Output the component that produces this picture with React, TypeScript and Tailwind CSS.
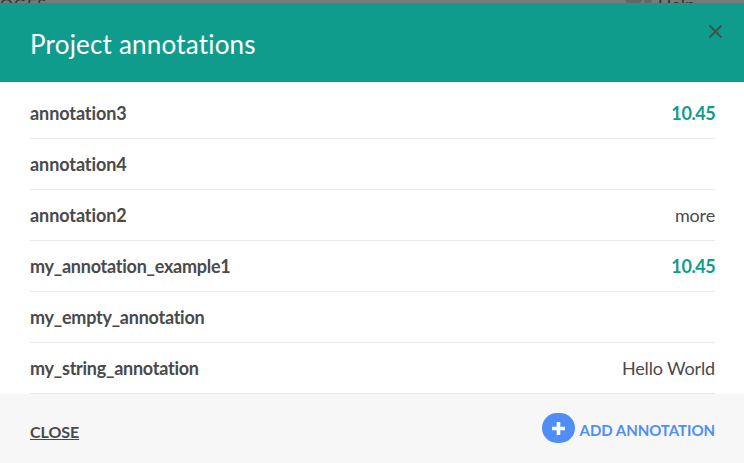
type Annotation = { name: string; value?: string; numeric?: boolean };

const annotations: Annotation[] = [
  { name: "annotation3", value: "10.45", numeric: true },
  { name: "annotation4" },
  { name: "annotation2", value: "more" },
  { name: "my_annotation_example1", value: "10.45", numeric: true },
  { name: "my_empty_annotation" },
  { name: "my_string_annotation", value: "Hello World" },
];

function Backdrop() {
  return (
    <div className="flex h-[3px] justify-between overflow-hidden bg-[#7a7a7a] pr-[49px] text-[16px] leading-[16px] text-[#333]">
      <span className="-mt-[4px] tracking-[1.2px]">OGES</span>
      <span className="flex gap-[6px]">
        <span className="flex gap-[2px]">
          <span className="h-[3px] w-[17px] rounded-b-sm bg-[#666]" />
          <span className="h-[3px] w-[8px] rounded-b-sm bg-[#666]" />
        </span>
        <span className="-mt-[4px] text-[18px]">Help</span>
      </span>
    </div>
  );
}

export default function App() {
  return (
    <div className="flex h-[463px] w-[744px] flex-col overflow-hidden bg-white font-['Lato',sans-serif] text-[#4a4a4a] [font-variant-ligatures:none]">
      <Backdrop />
      <header className="flex h-[79px] items-start justify-between bg-[#109c8c] pl-[30px] pr-[22px]">
        <h1 className="mt-[25px] text-[26px] leading-[32px] tracking-[0.2px] text-white">Project annotations</h1>
        <svg className="mt-[22px] h-[13px] w-[13px]" viewBox="0 0 13 13" stroke="#4d4d4d" strokeWidth="2">
          <path d="M.5.5l12 12M12.5.5l-12 12" />
        </svg>
      </header>
      <ul className="pl-[30px] pr-[29px] pt-[6px]">
        {annotations.map((a) => (
          <li key={a.name} className="flex h-[51px] items-center justify-between border-b border-[#ebebeb] text-[18px] leading-[26px]">
            <span className={a.name.includes("_") ? "font-bold tracking-[-0.25px]" : "font-bold tracking-[-0.08px]"}>{a.name}</span>
            {a.value && (
              <span className={a.numeric ? "-mr-[0.4px] font-bold tracking-[-0.4px] text-[#109c8c]" : "tracking-[-0.15px]"}>
                {a.value}
              </span>
            )}
          </li>
        ))}
      </ul>
      <footer className="flex grow items-start justify-between bg-[#f7f7f7] pl-[30px] pr-[29px]">
        <button className="mt-[27px] text-[16px] font-bold leading-[22px] tracking-[-0.05px] underline">CLOSE</button>
        <button className="mt-[19px] flex items-start gap-[5px] text-[#4f8ef7]">
          <span className="flex h-[30px] w-[33px] items-center justify-center rounded-[15px] bg-[#4f8ef7]">
            <svg className="h-[13px] w-[13px]" viewBox="0 0 13 13" fill="#fff">
              <path d="M4.7 0h3.6v4.7H13v3.6H8.3V13H4.7V8.3H0V4.7h4.7z" />
            </svg>
          </span>
          <span className="mt-[6px] text-[15px] font-bold leading-[22px] tracking-[-0.05px]">ADD ANNOTATION</span>
        </button>
      </footer>
    </div>
  );
}
